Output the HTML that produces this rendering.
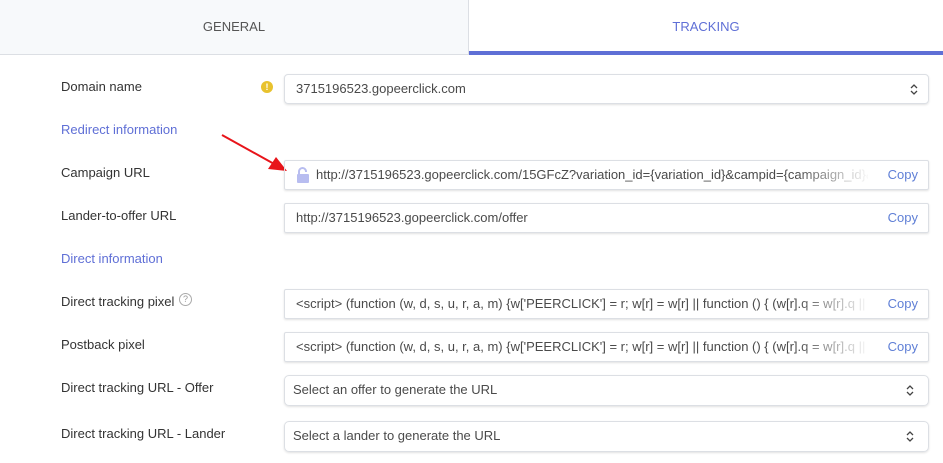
<!DOCTYPE html><html><head><style>
body{margin:0;width:943px;height:463px;overflow:hidden;background:#fff;font-family:"Liberation Sans",sans-serif;font-size:13px;color:#333}
.tabs{position:absolute;left:0;top:0;width:943px;height:54px;border-bottom:1px solid #dcdfe4}
.t1{position:absolute;left:0;top:0;width:468px;height:54px;background:#f7f9fb;border-right:1px solid #dcdfe4;text-align:center;line-height:54px;color:#555}
.t2{position:absolute;left:469px;top:0;width:474px;height:51px;text-align:center;line-height:54px;color:#5f6fd6;border-bottom:4px solid #5f6fd6}
.lbl{position:absolute;left:61px;color:#333}
.sec{position:absolute;left:61px;color:#5f6fd6}
.box{position:absolute;left:284px;width:643px;height:28px;border:1px solid #dcdfe4;border-radius:2px;box-shadow:0 1px 2px rgba(0,0,0,.12);line-height:28px;overflow:hidden;white-space:nowrap;color:#4a4a4a}
.box .tx{position:absolute;left:11px;top:0;width:572px;overflow:hidden}
.box .fade{position:absolute;left:510px;top:0;width:80px;height:28px;background:linear-gradient(to right,rgba(255,255,255,0),#fff 95%)}
.copy{position:absolute;right:10px;top:0;color:#5f7fd6}
.sel{border-radius:4px}
</style></head><body>
<div class="tabs"><div class="t1">GENERAL</div><div class="t2">TRACKING</div></div>

<div class="lbl" style="top:79px">Domain name</div>
<div style="position:absolute;left:261px;top:81px;width:12px;height:12px;border-radius:50%;background:#e8c22e;color:#fff;font-size:9px;font-weight:bold;text-align:center;line-height:12px">!</div>
<div class="box sel" style="top:74px"><div class="tx">3715196523.gopeerclick.com</div><svg style="position:absolute;right:10px;top:9px" width="8" height="11" viewBox="0 0 8 11"><path d="M1 4L4 1L7 4M1 7L4 10L7 7" fill="none" stroke="#444" stroke-width="1.3"/></svg></div>

<div class="sec" style="top:122px">Redirect information</div>
<svg style="position:absolute;left:218px;top:132px" width="72" height="42"><line x1="4" y1="3" x2="58" y2="33" stroke="#e8141a" stroke-width="2"/><path d="M69 39L50 37L58 25Z" fill="#e8141a"/></svg>

<div class="lbl" style="top:165px">Campaign URL</div>
<div class="box" style="top:160px"><svg style="position:absolute;left:11px;top:6px" width="14" height="16" viewBox="0 0 14 16"><path d="M3 7V4.5a3.5 3.5 0 0 1 7 0V5" fill="none" stroke="#b8bdf0" stroke-width="2"/><rect x="1" y="7" width="12" height="9" rx="1" fill="#b8bdf0"/></svg><div class="tx" style="left:31px;width:552px">http://3715196523.gopeerclick.com/15GFcZ?variation_id={variation_id}&amp;campid={campaign_id}&amp;x</div><div class="fade"></div><span class="copy">Copy</span></div>

<div class="lbl" style="top:208px">Lander-to-offer URL</div>
<div class="box" style="top:203px"><div class="tx">http://3715196523.gopeerclick.com/offer</div><span class="copy">Copy</span></div>

<div class="sec" style="top:251px">Direct information</div>

<div class="lbl" style="top:294px">Direct tracking pixel</div>
<div style="position:absolute;left:179px;top:293px;width:11px;height:11px;border:1px solid #aaa;border-radius:50%;color:#999;font-size:9px;text-align:center;line-height:11px">?</div>
<div class="box" style="top:289px"><div class="tx">&lt;script&gt; (function (w, d, s, u, r, a, m) {w['PEERCLICK'] = r; w[r] = w[r] || function () { (w[r].q = w[r].q || []).push</div><div class="fade"></div><span class="copy">Copy</span></div>

<div class="lbl" style="top:337px">Postback pixel</div>
<div class="box" style="top:332px"><div class="tx">&lt;script&gt; (function (w, d, s, u, r, a, m) {w['PEERCLICK'] = r; w[r] = w[r] || function () { (w[r].q = w[r].q || []).push</div><div class="fade"></div><span class="copy">Copy</span></div>

<div class="lbl" style="top:380px">Direct tracking URL - Offer</div>
<div class="box sel" style="top:375px;height:29px;border-radius:5px"><div class="tx" style="left:8px">Select an offer to generate the URL</div><svg style="position:absolute;right:14px;top:9px" width="8" height="11" viewBox="0 0 8 11"><path d="M1 4L4 1L7 4M1 7L4 10L7 7" fill="none" stroke="#444" stroke-width="1.3"/></svg></div>

<div class="lbl" style="top:426px">Direct tracking URL - Lander</div>
<div class="box sel" style="top:421px;height:29px;border-radius:5px"><div class="tx" style="left:8px">Select a lander to generate the URL</div><svg style="position:absolute;right:14px;top:9px" width="8" height="11" viewBox="0 0 8 11"><path d="M1 4L4 1L7 4M1 7L4 10L7 7" fill="none" stroke="#444" stroke-width="1.3"/></svg></div>
</body></html>
